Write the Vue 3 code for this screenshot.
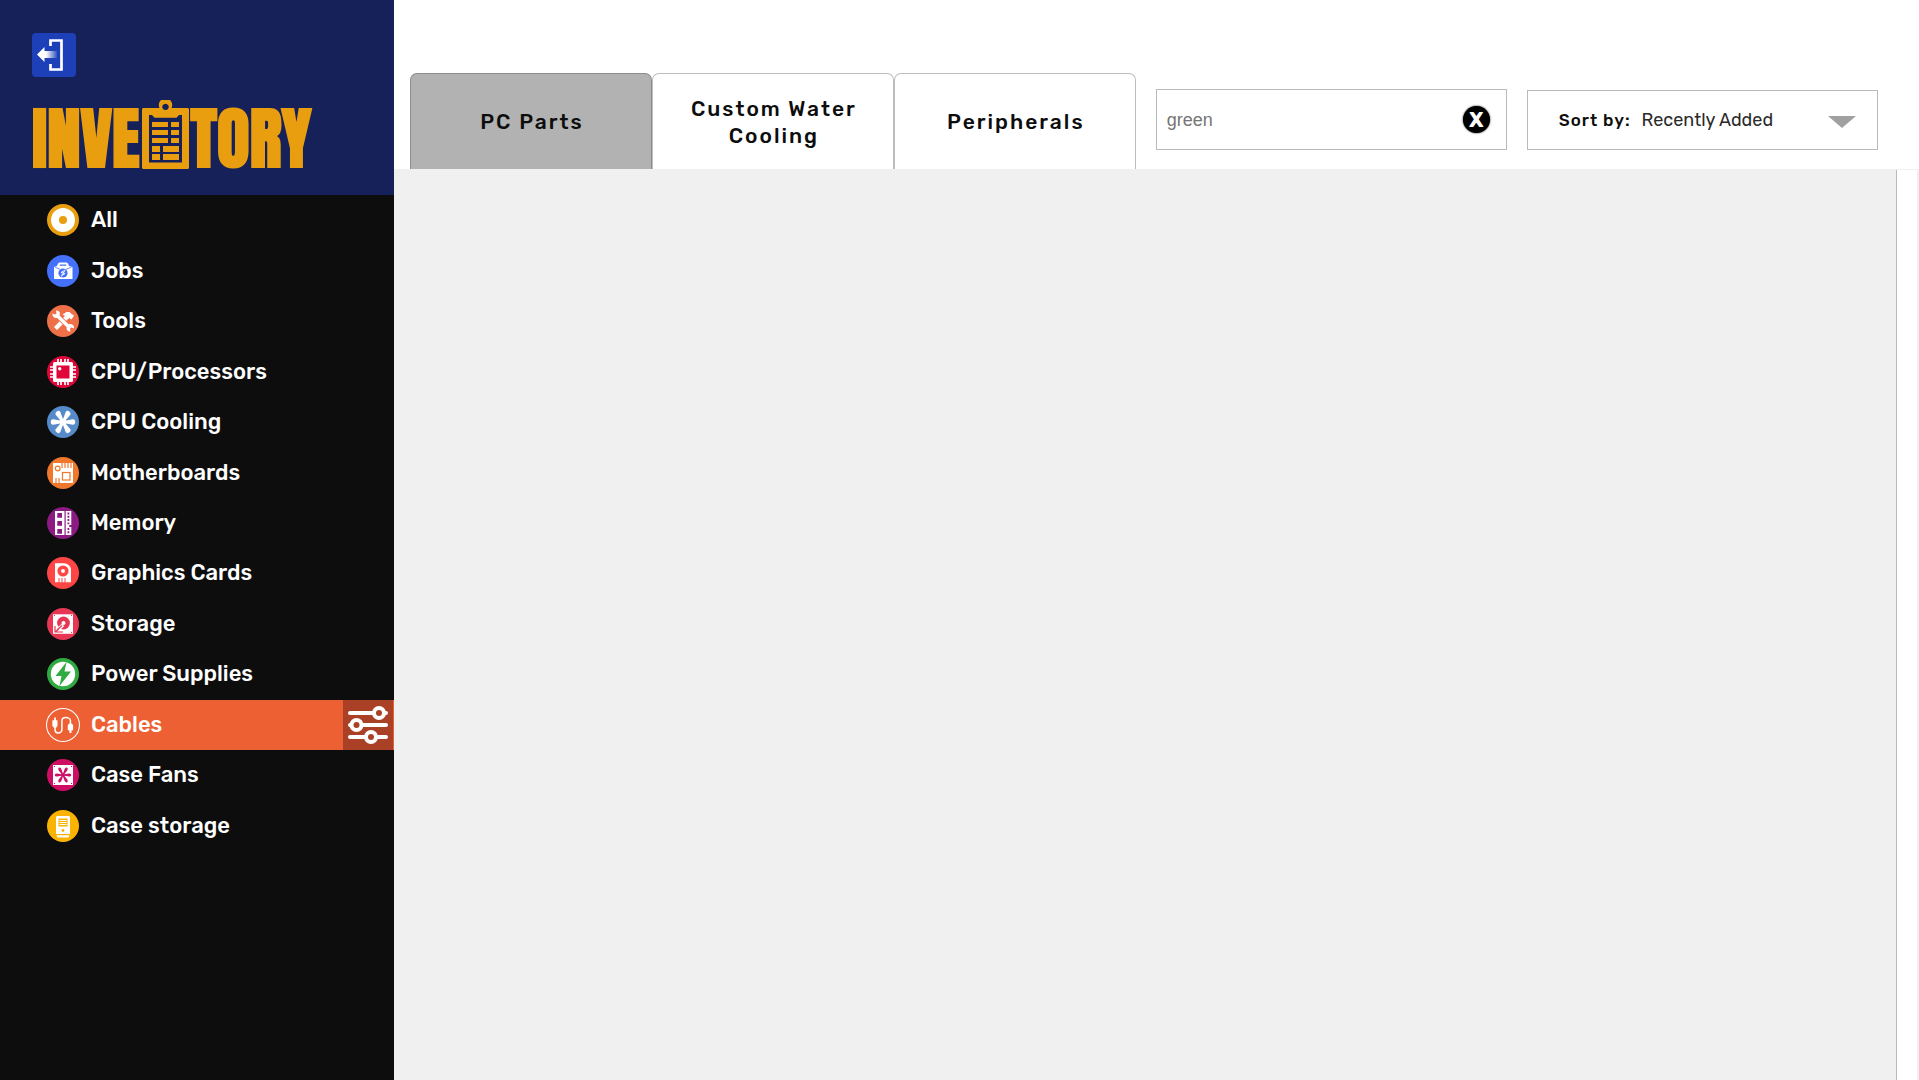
<script setup>
import { ref } from 'vue'

const categories = [
  { id: 'all', label: 'All', color: '#e99e0f' },
  { id: 'jobs', label: 'Jobs', color: '#4470fb' },
  { id: 'tools', label: 'Tools', color: '#ee7049' },
  { id: 'cpu', label: 'CPU/Processors', color: '#e1063a' },
  { id: 'cooling', label: 'CPU Cooling', color: '#568bca' },
  { id: 'boards', label: 'Motherboards', color: '#f0782d' },
  { id: 'memory', label: 'Memory', color: '#8d1b84' },
  { id: 'gpu', label: 'Graphics Cards', color: '#ff4645' },
  { id: 'storage', label: 'Storage', color: '#e73755' },
  { id: 'power', label: 'Power Supplies', color: '#2fab41' },
  { id: 'cables', label: 'Cables', color: 'none' },
  { id: 'fans', label: 'Case Fans', color: '#ce0e65' },
  { id: 'case', label: 'Case storage', color: '#fbb302' }
]
const tabs = ['PC Parts', 'Custom Water Cooling', 'Peripherals']
const active = ref('cables')
const activeTab = ref('PC Parts')
const search = ref('green')
const sort = ref('Recently Added')
const blades = [0, 60, 120, 180, 240, 300]
const pins = [11, 14, 18, 21]
</script>

<template>
  <div class="page">
    <aside class="sidebar">
      <header class="brand">
        <button class="logout" aria-label="Log out">
          <svg viewBox="0 0 44 44">
            <defs>
              <linearGradient id="fade" x1="0" x2="1">
                <stop offset="0.45" stop-color="#fff" />
                <stop offset="1" stop-color="#fff" stop-opacity="0.1" />
              </linearGradient>
            </defs>
            <path d="M5 21.5 12.5 14v4H25v7H12.500v4z" fill="url(#fade)" />
            <path d="M18.500 13V7.500H29.500V36.500H18.500V31" fill="none" stroke="#fff" stroke-width="2.700" />
          </svg>
        </button>
        <h1 class="logo">
          <span class="word">INVE</span>
          <svg class="clipboard" viewBox="0 0 47 69" role="img" aria-label="N">
            <g fill="#e99e0f">
              <path fill-rule="evenodd" d="M1 8H17.500A6.700 6.700 0 1 1 29.500 8H46L47 9V68L46 69H1L0 68V9ZM7 15V62.600H40V15H37L34.500 17.700H12.500L10 15ZM23.500 3.700A3.200 3.200 0 1 0 23.510 3.700Z" />
              <path d="M10 22h16v5H10zM29 22h8v5h-8zM10 30h16v5H10zM29 30h8v5h-8zM10 38h16v5H10zM29 38h8v5h-8zM10 46h8v6h-8zM21 46h16v6H21zM10 54h8v6h-8zM21 54h16v6H21z" />
            </g>
          </svg>
          <span class="word">TORY</span>
        </h1>
      </header>

      <nav class="nav" aria-label="Categories">
        <div v-for="c in categories" :key="c.id" class="row" :class="{ active: active === c.id }">
          <a href="#" class="link" @click.prevent="active = c.id">
            <svg class="icon" viewBox="0 0 32 32" fill="#fff" aria-hidden="true">
              <circle cx="16" cy="16" r="16" :fill="c.color" />
              <template v-if="c.id === 'all'">
                <circle cx="16" cy="16" r="12" />
                <circle cx="16" cy="16" r="4" :fill="c.color" />
              </template>
              <template v-else-if="c.id === 'jobs'">
                <path d="M7 24V12l3-1 1-2.500L12.500 7.500h7L21 8.500 22 11l3.500 1v12z" />
                <path d="M12.500 10.800 13 9.500h6l.5 1.300z" :fill="c.color" />
                <path d="M8 12.200 13 14.300M24.500 12.200 19 14.300" :stroke="c.color" stroke-width=".8" />
                <circle cx="16" cy="18" r="4.600" :fill="c.color" />
                <path d="M18 15 14 17.500l4 1-4 2.800M14.500 20.500l3.500-5" fill="none" stroke="#fff" stroke-width=".9" />
              </template>
              <template v-else-if="c.id === 'tools'">
                <path d="M8.500 23.500 20.500 11.500" stroke="#fff" stroke-width="4.200" />
                <path d="M15.500 9.500 19.500 7h3l2 2 2.500 1.500-2.500 4-2-1.500-1.500 1-3-3z" />
                <path d="M9.500 10 23 23" :stroke="c.color" stroke-width="5.200" />
                <path d="M9.500 10 23 23" stroke="#fff" stroke-width="3.400" />
                <path d="M9 5.500 9.500 8.500 8 9.500 5.500 8.500C5 12 8 14 11.500 12.500L13 9C13 6.500 11 5 9 5.500ZM23.500 26.500 23 23.500 24.500 22.500 27 23.500C27.500 20 24.500 18 21 19.500L19.500 23C19.500 25.500 21.500 27 23.500 26.500Z" />
              </template>
              <template v-else-if="c.id === 'cpu'">
                <path v-for="p in pins" :key="p" :d="`M${p} 3V29M3 ${p}H29`" stroke="#fff" stroke-width="1.700" />
                <rect x="6" y="6" width="20" height="20" rx="1.500" />
                <rect x="9.500" y="9.500" width="13" height="13" :fill="c.color" />
                <circle cx="12.700" cy="12.700" r="1.700" />
              </template>
              <template v-else-if="c.id === 'cooling'">
                <circle cx="16" cy="16" r="3.200" />
                <path v-for="b in blades" :key="b" d="M16 15 26 13.300Q28.200 13.300 28.200 16T26 18.700L16 17z" :transform="`rotate(${b} 16 16)`" />
              </template>
              <template v-else-if="c.id === 'boards'">
                <rect x="6" y="6" width="20" height="20" />
                <g fill="none" :stroke="c.color" stroke-width="1.200">
                  <circle cx="10.700" cy="11.500" r="2.400" />
                  <rect x="15.500" y="15.500" width="7.500" height="7.500" />
                  <path d="M15 6v5M18 6v5M21 6v5M24 6v5M9 21v5M12 21v5" />
                </g>
              </template>
              <template v-else-if="c.id === 'memory'">
                <path d="M8 4h9.500v24H8zM18.700 4h5.600v14h-2v2h2v8h-5.600z" />
                <path d="M10.300 6H15v4.700h-4.700zM10.300 14H15v4.700h-4.700zM10.300 22H15v4.700h-4.700z" :fill="c.color" />
                <path d="M21.400 5.500V18M21.400 21v6" :stroke="c.color" stroke-width="1.800" stroke-dasharray="1.900 1.400" />
              </template>
              <template v-else-if="c.id === 'gpu'">
                <path d="M8 6.300h9a7 7 0 0 1 7 7v12H8z" />
                <circle cx="16" cy="14" r="5.600" :fill="c.color" />
                <circle cx="16" cy="14" r="2" />
                <path d="M12 21v5M15 21v5M18 21v5" :stroke="c.color" stroke-width="1" />
              </template>
              <template v-else-if="c.id === 'storage'">
                <rect x="6" y="6.300" width="20" height="19.500" />
                <circle cx="16.500" cy="15" r="6.400" :fill="c.color" />
                <circle cx="16.500" cy="15" r="2" />
                <path d="M9 23 16 17" stroke="#fff" stroke-width="3.500" />
                <path d="M8 18v6h8M10 22l5-4.500M8 24l4-3" fill="none" :stroke="c.color" stroke-width="1.200" />
                <path d="M7 7.500h1M24 7.500h1M24 24.500h1" :stroke="c.color" />
              </template>
              <template v-else-if="c.id === 'power'">
                <circle cx="16" cy="16" r="12.200" />
                <path d="M19.500 4 8.500 18h6L12.500 28 24 13.500h-6.500z" :fill="c.color" />
              </template>
              <template v-else-if="c.id === 'cables'">
                <circle cx="16" cy="16" r="15.500" fill="none" stroke="#fff" stroke-width="1" />
                <path d="M8.500 17v3.500C8.500 22 9.500 23.500 11.500 23.500S15 22 15 20.500V12C15 10 16.500 9 18.500 9S23 10 23 12V16" fill="none" stroke="#fff" stroke-width="1.400" />
                <path d="M7.700 9h1.600v2.500h1.500V17L9.500 18.500h-2L6 17v-5.500h1.700zM22 14.500h2l1.500 1.500v5H24V23.500h-2V21h-1.500v-5z" />
              </template>
              <template v-else-if="c.id === 'fans'">
                <rect x="6" y="6" width="20" height="20" />
                <path v-for="b in blades" :key="b" d="M16 15.500 22 14.500Q24.300 14.500 24.300 16T22 17.500L16 16.500z" :transform="`rotate(${b} 16 16)`" :fill="c.color" />
                <circle cx="16" cy="16" r="1.800" :fill="c.color" />
                <path d="M7 7.500h1M24 7.500h1M7 24.500h1M24 24.500h1" :stroke="c.color" />
              </template>
              <template v-else>
                <path d="M10 6h12l1 1v17H9V7zM9.500 25.300h13L21.500 27.500h-11z" />
                <path d="M11.500 8.500h9v8h-9z" :fill="c.color" />
                <path d="M12.500 10.500h7M12.500 12.500h7M12.500 14.500h7" stroke="#fff" />
                <circle cx="16" cy="20.500" r="1.400" :fill="c.color" />
              </template>
            </svg>
            <span>{{ c.label }}</span>
          </a>
          <button v-if="active === c.id" class="filter" aria-label="Filters">
            <svg viewBox="0 0 50 50" fill="none" stroke="#fff" stroke-width="4" stroke-linecap="round">
              <path d="M7 13H31M41 13H43M7 25H8M19 25H43M7 37H23M33 37H43" />
              <circle cx="36" cy="13" r="5" />
              <circle cx="13.500" cy="25" r="5" />
              <circle cx="28" cy="37" r="5" />
            </svg>
          </button>
        </div>
      </nav>
    </aside>

    <main class="main">
      <div class="toolbar">
        <div class="tabs" role="tablist">
          <button v-for="t in tabs" :key="t" class="tab" role="tab" :aria-selected="activeTab === t" :class="{ current: activeTab === t }" @click="activeTab = t">
            {{ t }}
          </button>
        </div>
        <div class="field search">
          <input v-model="search" type="text" aria-label="Search" />
          <button class="clear" aria-label="Clear search" @click="search = ''">X</button>
        </div>
        <div class="field sort">
          <label for="sort">Sort by:</label>
          <select id="sort" v-model="sort">
            <option>Recently Added</option>
            <option>Name</option>
          </select>
          <svg class="arrow" viewBox="0 0 28 12" aria-hidden="true"><path d="M0 0H28L14 12z" fill="#a0a0a0" /></svg>
        </div>
      </div>
      <div class="body">
        <section class="results" aria-label="Results"></section>
      </div>
    </main>
  </div>
</template>

<style>
body {
  margin: 0;
}
</style>

<style scoped>
.page {
  display: flex;
  min-height: 100vh;
  background: #fff;
  font-family: Rubik, Roboto, sans-serif;
}
.page * {
  box-sizing: border-box;
}
button {
  font-family: inherit;
  padding: 0;
  border: 0;
  cursor: pointer;
}
.sidebar {
  flex: none;
  width: 394px;
  background: #0d0d0d;
}
.brand {
  display: flex;
  flex-direction: column;
  justify-content: space-between;
  height: 195px;
  padding: 33px 32px 26px;
  background: #172159;
}
.logout {
  width: 44px;
  height: 44px;
  border-radius: 4px;
  background: #1d40b8;
}
.logout svg,
.filter svg {
  display: block;
  width: 100%;
}
.logo {
  display: flex;
  align-items: flex-end;
  gap: 2px;
  margin: 0;
  color: #e99e0f;
}
.word {
  font: 700 67px/60px Impact, Anton, "Roboto Condensed", "Liberation Sans Narrow", "Liberation Sans", sans-serif;
}
.clipboard {
  flex: none;
  width: 47px;
  height: 69px;
}
.nav {
  display: grid;
  grid-auto-rows: 1fr;
  min-height: 656px;
}
.row {
  display: flex;
  align-items: stretch;
}
.row.active {
  padding-right: 1px;
  background: #ed6034;
}
.link {
  display: flex;
  flex: 1;
  align-items: center;
  gap: 12px;
  padding-left: 47px;
  color: #fff;
  font-size: 22px;
  font-weight: 500;
  line-height: 28px;
  text-decoration: none;
}
.icon {
  width: 32px;
  height: 32px;
  overflow: visible;
}
.active .icon {
  width: 34px;
  height: 34px;
  margin: 0 -1px;
}
.filter {
  width: 50px;
  background: #aa4126;
}
.main {
  display: flex;
  flex: 1;
  flex-direction: column;
  min-width: 0;
}
.toolbar {
  display: grid;
  grid-template-columns: 62fr 30fr 30fr;
  column-gap: 20px;
  align-items: end;
  padding: 73px 41px 0 16px;
}
.tabs {
  display: flex;
}
.tab {
  flex: 1 1 0;
  height: 96px;
  padding: 0 23px 0 25px;
  border: 1px solid #bdbdbd;
  border-bottom: 0;
  border-radius: 7px 7px 0 0;
  background: #fff;
  color: #0d0d0d;
  font-size: 21px;
  font-weight: 500;
  line-height: 27px;
  letter-spacing: 2px;
}
.tab.current {
  border-color: #8c8c8c;
  background: #b2b2b2;
}
.field {
  display: flex;
  align-items: center;
  height: 61px;
  margin-bottom: 19px;
  border: 1px solid #bababa;
  background: #fff;
}
.search input {
  flex: 1;
  min-width: 0;
  padding: 2px 10px 0;
  border: 0;
  outline: 0;
  color: #757575;
  font: 18px "Liberation Sans", Arial, sans-serif;
}
.clear {
  width: 27px;
  height: 27px;
  margin-right: 16px;
  border-radius: 50%;
  background: #000;
  box-shadow: 0 0 2px #000;
  color: #fff;
  font-size: 21px;
  font-weight: 700;
  line-height: 27px;
}
.sort {
  position: relative;
  height: 60px;
  padding-left: 31px;
}
.sort label {
  color: #0d0d0d;
  font-size: 17px;
  font-weight: 500;
  letter-spacing: 1px;
}
.sort select {
  flex: 1;
  align-self: stretch;
  margin-left: 11px;
  padding: 0;
  border: 0;
  outline: 0;
  appearance: none;
  background: transparent;
  color: #2a2a2a;
  font: 400 18px Rubik, Roboto, sans-serif;
}
.arrow {
  position: absolute;
  top: 25px;
  right: 21px;
  width: 28px;
  height: 12px;
  pointer-events: none;
}
.body {
  display: flex;
  flex: 1;
  border-top: 1px solid #f0f0f0;
  border-right: 2px solid #f0f0f0;
}
.results {
  flex: 1;
  margin-right: 20px;
  border-right: 1px solid #bababa;
  background: #f0f0f0;
}
</style>
